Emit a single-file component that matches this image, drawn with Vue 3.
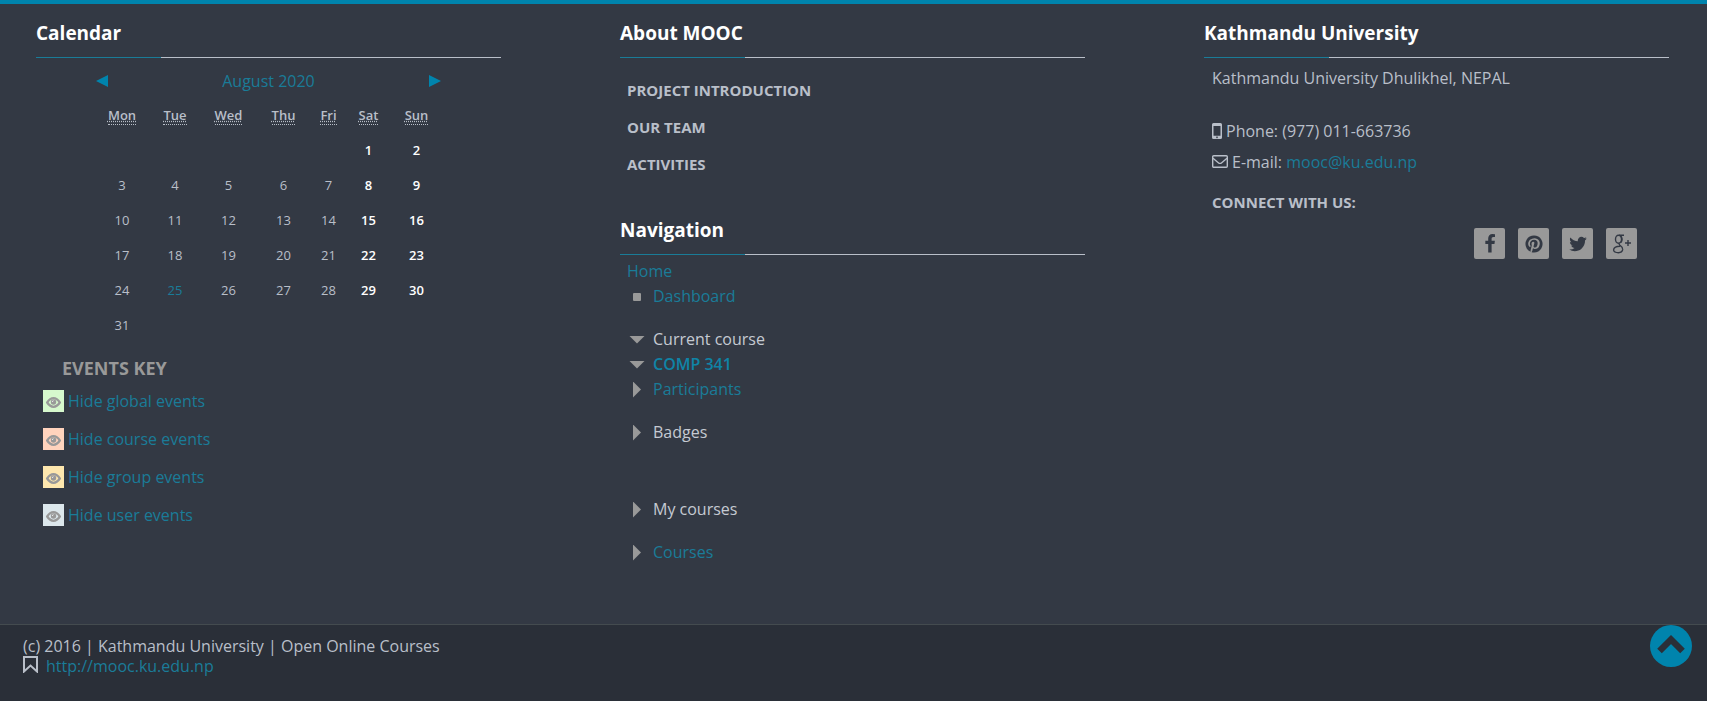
<script setup>
const days = [
  ['Mon', 'Monday'], ['Tue', 'Tuesday'], ['Wed', 'Wednesday'], ['Thu', 'Thursday'],
  ['Fri', 'Friday'], ['Sat', 'Saturday'], ['Sun', 'Sunday']
]
const weeks = [
  ['', '', '', '', '', 1, 2],
  [3, 4, 5, 6, 7, 8, 9],
  [10, 11, 12, 13, 14, 15, 16],
  [17, 18, 19, 20, 21, 22, 23],
  [24, 25, 26, 27, 28, 29, 30],
  [31, '', '', '', '', '', '']
]
const kinds = ['global', 'course', 'group', 'user']
</script>

<template>
  <div class="page">
    <main class="columns">
      <div class="column">
        <section>
          <h2>Calendar</h2>
          <div class="cal-nav">
            <a href="#prev" aria-label="Previous month"><svg width="12" height="12" viewBox="0 0 12 12"><path d="M12 0v12L0 6z" /></svg></a>
            <a href="#month">August 2020</a>
            <a href="#next" aria-label="Next month"><svg width="12" height="12" viewBox="0 0 12 12"><path d="M0 0v12l12-6z" /></svg></a>
          </div>
          <table>
            <thead>
              <tr><th v-for="d in days" :key="d[0]" scope="col"><abbr :title="d[1]">{{ d[0] }}</abbr></th></tr>
            </thead>
            <tbody>
              <tr v-for="(w, i) in weeks" :key="i">
                <td v-for="(n, j) in w" :key="j" :class="{ weekend: j > 4, today: n === 25 }">{{ n }}</td>
              </tr>
            </tbody>
          </table>
          <h3 class="key-title">EVENTS KEY</h3>
          <ul class="keys">
            <li v-for="k in kinds" :key="k">
              <a :href="'#' + k">
                <span class="swatch" :class="k">
                  <svg width="15" height="11" viewBox="0 0 15 11"><path d="M1.200 5.500Q4 1.200 7.500 1.200T13.800 5.500Q11 9.800 7.500 9.800T1.200 5.500z" fill="none" stroke="#999" stroke-width="2.300" /><circle cx="7.500" cy="5" r="2.700" fill="#999" /><path d="M6.300 5q0-1.200 1.200-1.300" fill="none" stroke="#fff" stroke-width=".8" /></svg>
                </span>
                Hide {{ k }} events
              </a>
            </li>
          </ul>
        </section>
      </div>

      <div class="column">
        <section class="about">
          <h2>About MOOC</h2>
          <ul class="links">
            <li><a href="#intro">PROJECT INTRODUCTION</a></li>
            <li><a href="#team">OUR TEAM</a></li>
            <li><a href="#activities">ACTIVITIES</a></li>
          </ul>
        </section>
        <section>
          <h2>Navigation</h2>
          <nav class="tree">
            <a href="#home">Home</a>
            <ul>
              <li class="item spaced"><span class="mark"><i class="square"></i></span><a href="#dashboard">Dashboard</a></li>
              <li class="item"><span class="mark"><i class="down"></i></span>Current course</li>
              <li class="item"><span class="mark"><i class="down"></i></span><a class="current" href="#comp341">COMP 341</a></li>
              <li class="item spaced"><span class="mark"><i class="right"></i></span><a href="#participants">Participants</a></li>
              <li class="item group-end"><span class="mark"><i class="right"></i></span>Badges</li>
              <li class="item spaced"><span class="mark"><i class="right"></i></span>My courses</li>
              <li class="item"><span class="mark"><i class="right"></i></span><a href="#courses">Courses</a></li>
            </ul>
          </nav>
        </section>
      </div>

      <div class="column">
        <section>
          <h2>Kathmandu University</h2>
          <address>
            <p class="place">Kathmandu University Dhulikhel, NEPAL</p>
            <p class="contact"><svg width="10" height="16" viewBox="0 0 10 16"><path fill-rule="evenodd" d="M1.500 0h7Q10 0 10 1.500v13Q10 16 8.500 16h-7Q0 16 0 14.500v-13Q0 0 1.500 0zM1.500 3v9.700h7V3zM5 13.500a.8.800 0 1 0 .01 0z" /></svg>Phone: (977) 011-663736</p>
            <p class="contact"><svg width="16" height="13" viewBox="0 0 16 13"><rect x=".7" y=".7" width="14.600" height="11.600" rx="1" class="line" /><path class="line" d="M1 3.200l5.300 4.500q1.700 1.400 3.400 0L15 3.200" /></svg>E-mail: <a href="mailto:mooc@ku.edu.np">mooc@ku.edu.np</a></p>
          </address>
          <h3 class="connect">CONNECT WITH US:</h3>
          <div class="social">
            <a href="#facebook" aria-label="Facebook"><svg width="20" height="20" viewBox="0 0 1792 1792"><path d="M1343 12v264h-157q-86 0-116 36t-30 108v189h293l-39 296h-254v759h-306v-759h-255v-296h255v-218q0-186 104-288.500t277-102.500q147 0 228 12z" /></svg></a>
            <a href="#pinterest" aria-label="Pinterest"><svg width="20" height="20" viewBox="0 0 1792 1792"><path d="M1664 896q0 209-103 385.500t-279.500 279.500-385.500 103q-111 0-218-32 59-93 78-164 9-34 54-211 20 39 73 67.500t114 28.500q121 0 216-68.500t147-188.500 52-270q0-114-59.500-214t-172.500-163-255-63q-105 0-196 29t-154.500 77-109 110.500-67 129.500-21.500 134q0 104 40 183t117 111q30 12 38-20 2-7 8-31t8-30q6-23-11-43-51-61-51-151 0-151 104.500-259.500t273.500-108.500q151 0 235.500 82t84.500 213q0 170-68.500 289t-175.500 119q-61 0-98-43.500t-23-104.500q8-35 26.500-93.500t30-103 11.500-75.500q0-50-27-83t-77-33q-62 0-105 57t-43 142q0 73 25 122l-99 418q-17 70-13 177-206-91-333-281t-127-423q0-209 103-385.500t279.500-279.500 385.500-103 385.500 103 279.500 279.500 103 385.500z" /></svg></a>
            <a href="#twitter" aria-label="Twitter"><svg width="20" height="20" viewBox="0 0 1792 1792"><path d="M1684 408q-67 98-162 167 1 14 1 42 0 130-38 259.500t-115.500 248.500-184.500 210.500-258 146-323 54.500q-271 0-496-145 35 4 78 4 225 0 401-138-105-2-188-64.500t-114-159.500q33 5 61 5 43 0 85-11-112-23-185.500-111.500t-73.500-205.500v-4q68 38 146 41-66-44-105-115t-39-154q0-88 44-163 121 149 294.500 238.500t371.500 99.500q-8-38-8-74 0-134 94.500-228.500t228.500-94.500q140 0 236 102 109-21 205-78-37 115-142 178 93-10 186-50z" /></svg></a>
            <a href="#google-plus" aria-label="Google Plus"><svg class="gplus" width="20" height="20" viewBox="0 0 20 20"><ellipse cx="6.500" cy="5.300" rx="3" ry="4" /><path d="M12 1.200H7M7.500 9.300q-.8 1.200.8 2.400 2.700 1.800 2.400 4-.6 3-4.200 3-4.600 0-4.900-2.700.2-3.600 6.400-3.800M8.500 1.500q3 4 .4 7M13 9h6M16 6v6" /></svg></a>
          </div>
        </section>
      </div>
    </main>

    <footer>
      <div class="credit">
        <p>(c) 2016 | Kathmandu University | Open Online Courses</p>
        <p class="site"><svg width="15" height="17" viewBox="0 0 15 17"><path class="line thick" d="M1 1h13v14.500l-6.500-6L1 15.500z" /></svg><a href="http://mooc.ku.edu.np">http://mooc.ku.edu.np</a></p>
      </div>
      <a class="top" href="#top" aria-label="Back to top"><svg width="42" height="42" viewBox="0 0 42 42"><circle cx="21" cy="21" r="21" fill="#0084ad" /><path d="M9.500 26L21 14.500 32.500 26" fill="none" stroke="#2a2f38" stroke-width="6.500" /></svg></a>
    </footer>
  </div>
</template>

<style>
body { margin: 0; background: #fff; }
</style>

<style scoped>
.page {
  display: flex;
  flex-direction: column;
  min-height: 100vh;
  box-sizing: border-box;
  margin-right: 2px;
  border-top: 4px solid #0084ad;
  background: #333944;
  color: #b9bfc9;
  font: 16px/20px "Open Sans", "Noto Sans", sans-serif;
}
h2, h3, p, ul { margin: 0; padding: 0; }
ul { list-style: none; }
a { color: #1a7c98; text-decoration: none; }
svg { display: block; flex: none; fill: currentColor; }
.line { fill: none; stroke: currentColor; stroke-width: 1.4; }
.thick { stroke-width: 2; }
.columns {
  flex: 1;
  display: grid;
  grid-template-columns: repeat(3, minmax(0, 1fr));
  gap: 119px;
  padding: 15px 38px 56px 36px;
}
h2 {
  display: flex;
  flex-direction: column;
  gap: 10px;
  color: #fff;
  font-size: 19px;
  font-weight: 700;
  line-height: 28px;
}
h2::after {
  content: "";
  height: 1px;
  background: linear-gradient(to right, #1a7c98 125px, #b9bfc9 125px);
}
.cal-nav {
  display: flex;
  justify-content: space-between;
  align-items: center;
  margin: 13px 60px 0;
}
.cal-nav svg { color: #0084ad; }
table {
  width: 346px;
  margin: 6px auto 0;
  border-collapse: collapse;
  font-size: 13px;
}
th, td { height: 35px; padding: 0; text-align: center; line-height: 20px; }
th { font-weight: 600; }
th:nth-child(1) { width: 53px; }
th:nth-child(2) { width: 53px; }
th:nth-child(3) { width: 54px; }
th:nth-child(4) { width: 56px; }
th:nth-child(5) { width: 34px; }
th:nth-child(6) { width: 46px; }
th:nth-child(7) { width: 50px; }
abbr { border-bottom: 1px dotted; text-decoration: underline dotted; line-height: 16px; }
.weekend { color: #fff; font-weight: 600; }
.today { color: #1a7c98; }
.key-title { margin: 16px 0 0 26px; color: #999; font-size: 18px; font-weight: 700; line-height: 20px; }
.keys { margin: 12px 0 0 7px; }
.keys li { height: 38px; }
.keys a { display: flex; align-items: center; gap: 4px; }
.swatch { display: flex; justify-content: center; align-items: center; width: 21px; height: 22px; padding-top: 3px; box-sizing: border-box; }
.global { background: #d6f8cd; }
.course { background: #ffd3bd; }
.group { background: #fee7ae; }
.user { background: #dce7ec; }
.about { margin-bottom: 33px; }
.links { padding: 14px 0 0 7px; }
.links li { height: 37px; line-height: 37px; }
.links a { color: #b9bfc9; font-size: 15px; font-weight: 700; }
.tree { padding: 4px 0 0 7px; line-height: 25px; }
.item { display: flex; align-items: center; color: #c5cad2; }
.spaced { margin-bottom: 18px; }
.group-end { margin-bottom: 52px; }
.mark { display: flex; justify-content: center; width: 20px; margin-right: 6px; }
.square { width: 8px; height: 8px; border-radius: 1px; background: #999; }
.down { width: 16px; height: 8px; background: #999; clip-path: polygon(0 0, 100% 0, 50% 100%); }
.right { width: 8px; height: 16px; background: #999; clip-path: polygon(0 0, 100% 50%, 0 100%); }
.current { color: #0f84a6; font-weight: 600; }
address { padding: 10px 0 0 8px; font-style: normal; }
.place { margin-bottom: 27px; }
.contact { display: flex; align-items: center; height: 31px; white-space: pre; }
.contact svg { margin-right: 4px; }
.connect { padding-left: 8px; margin-top: 15px; font-size: 15px; font-weight: 700; line-height: 20px; }
.social { display: flex; justify-content: flex-end; gap: 13px; margin: 16px 32px 0 0; }
.social a { display: grid; place-items: center; width: 31px; height: 31px; border-radius: 2px; background: #999; color: #333944; }
.gplus { fill: none; stroke: currentColor; stroke-width: 1.4; }
footer {
  display: flex;
  justify-content: space-between;
  min-height: 76px;
  padding: 0 15px 0 23px;
  border-top: 1px solid #444b4f;
  background: #2a2f38;
}
.credit { padding-top: 11px; }
.site { display: flex; gap: 8px; }
</style>
